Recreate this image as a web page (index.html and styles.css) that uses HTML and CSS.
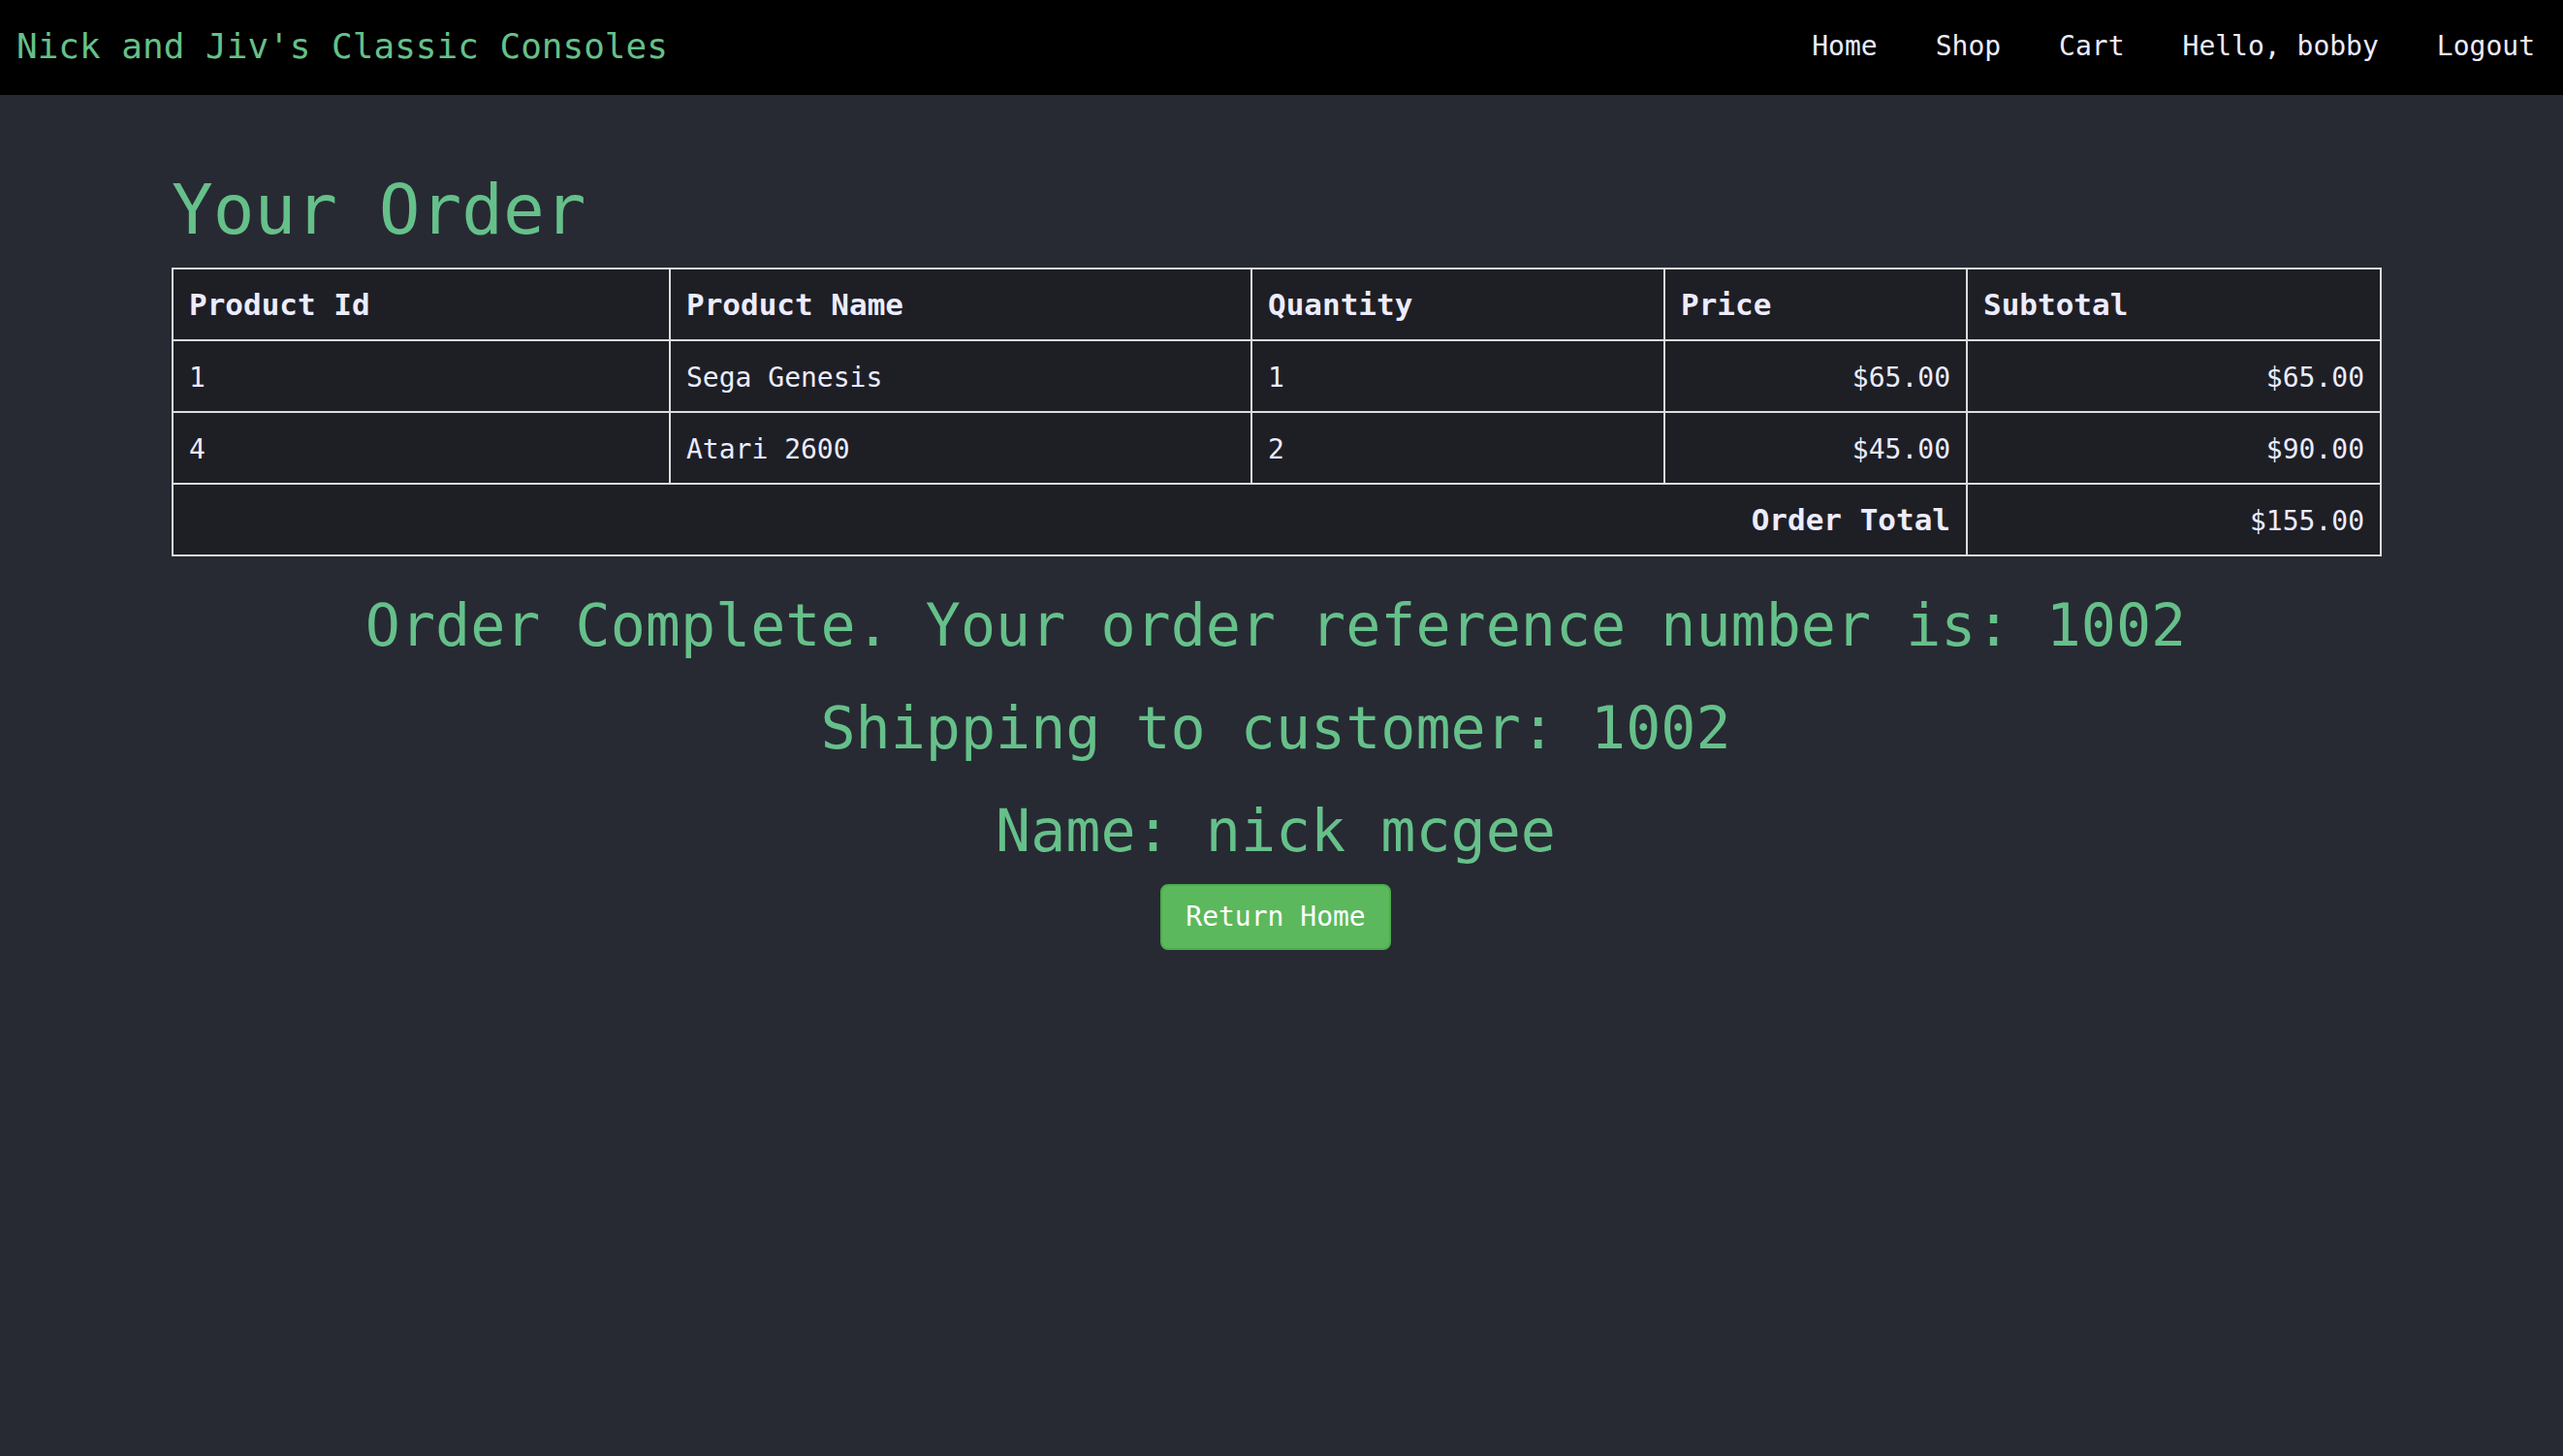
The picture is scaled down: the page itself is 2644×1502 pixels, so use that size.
FILE: index.html
```html
<!DOCTYPE html>
<html lang="en">
<head>
<meta charset="utf-8">
<title>Your Order</title>
<link rel="stylesheet" href="styles.css">
</head>
<body>
<header class="topbar">
  <a class="brand" href="#">Nick and Jiv's Classic Consoles</a>
  <nav class="nav">
    <a class="nav-link" href="#">Home</a>
    <a class="nav-link" href="#">Shop</a>
    <a class="nav-link" href="#">Cart</a>
    <a class="nav-link" href="#">Hello, bobby</a>
    <a class="nav-link" href="#">Logout</a>
  </nav>
</header>
<main class="content">
  <h1 class="title">Your Order</h1>
  <table class="order">
    <colgroup>
      <col class="c1"><col class="c2"><col class="c3"><col class="c4"><col class="c5">
    </colgroup>
    <thead>
      <tr><th>Product Id</th><th>Product Name</th><th>Quantity</th><th>Price</th><th>Subtotal</th></tr>
    </thead>
    <tbody>
      <tr><td>1</td><td>Sega Genesis</td><td>1</td><td class="num">$65.00</td><td class="num">$65.00</td></tr>
      <tr><td>4</td><td>Atari 2600</td><td>2</td><td class="num">$45.00</td><td class="num">$90.00</td></tr>
      <tr><th colspan="4" class="total-label">Order Total</th><td class="num">$155.00</td></tr>
    </tbody>
  </table>
  <div class="confirm">
    <h2 class="msg">Order Complete. Your order reference number is: 1002</h2>
    <h2 class="msg">Shipping to customer: 1002</h2>
    <h2 class="msg last">Name: nick mcgee</h2>
    <a class="btn" href="#">Return Home</a>
  </div>
</main>
</body>
</html>
```

FILE: styles.css
```css
html, body {
  margin: 0;
  padding: 0;
}
body {
  background: #272a33;
  font-family: "DejaVu Sans Mono", "Liberation Mono", monospace;
  color: #ececff;
  min-height: 1502px;
}
.topbar {
  height: 98px;
  background: #000;
  display: flex;
  align-items: center;
  justify-content: space-between;
  padding: 0 29px 3px 17px;
  box-sizing: border-box;
}
.brand {
  font-size: 36px;
  color: #66c08a;
  text-decoration: none;
}
.nav {
  display: flex;
  gap: 60px;
}
.nav-link {
  font-size: 28px;
  color: #ececff;
  text-decoration: none;
}
.content {
  margin-left: 177px;
  width: 2278px;
}
.title {
  font-size: 71px;
  font-weight: normal;
  line-height: 86px;
  color: #66c08a;
  margin: 76px 0 16px 0;
}
.order {
  width: 2278px;
  table-layout: fixed;
  border-collapse: collapse;
  background: #1e1f25;
  border: 2px solid #dcdcdc;
}
.c1 { width: 513px; }
.c2 { width: 600px; }
.c3 { width: 426px; }
.c4 { width: 312px; }
.c5 { width: 427px; }
.order th, .order td {
  border: 2px solid #dcdcdc;
  padding: 12px 16px;
  line-height: 48px;
  text-align: left;
  color: #ececff;
}
.order th {
  font-size: 31px;
  font-weight: bold;
}
.order td {
  font-size: 28px;
  padding-top: 14px;
  padding-bottom: 10px;
}
.order td.num {
  text-align: right;
}
.order th.total-label {
  text-align: right;
}
.confirm {
  display: flex;
  flex-direction: column;
  align-items: center;
  margin-top: 23px;
}
.msg {
  font-size: 60px;
  font-weight: normal;
  line-height: 96px;
  color: #66c08a;
  margin: 0 0 10px 0;
}
.msg.last {
  margin-bottom: 7px;
}
.btn {
  display: inline-block;
  background: #5cb85c;
  border: 2px solid #4cae4c;
  border-radius: 8px;
  color: #fff;
  font-size: 28px;
  line-height: 40px;
  padding: 12px 24px;
  text-decoration: none;
}
```
